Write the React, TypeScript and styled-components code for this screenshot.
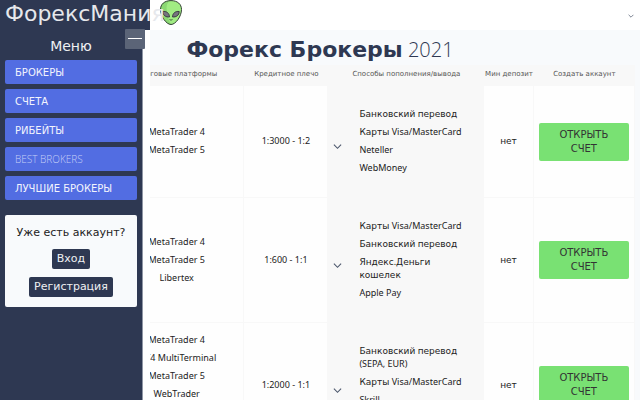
import React, { Fragment } from 'react';
import styled, { createGlobalStyle } from 'styled-components';

const GlobalStyle = createGlobalStyle`
  *, *::before, *::after { box-sizing: border-box; }
  body {
    margin: 0;
    background: #fefefe;
    color: #222;
    font: 9px/13px "DejaVu Sans", sans-serif;
  }
  button { font-family: inherit; cursor: pointer; }
  a { color: inherit; text-decoration: none; }
`;

const Page = styled.div`
  display: flex;
  flex-direction: column;
  height: 100vh;
  overflow: hidden;
`;

const TopBar = styled.header`
  display: flex;
  flex: none;
  align-items: center;
  justify-content: space-between;
  height: 30px;
  background: #fff;
`;

const Brand = styled.a`
  position: relative;
  display: flex;
  align-items: center;
  width: 150px;
  height: 30px;
  padding: 0 0 2px 5px;
  background: #2e3852;
  color: #e6e8ec;
  font-size: 22px;
  line-height: 28px;
  white-space: nowrap;
`;

const Mascot = styled.svg`
  position: absolute;
  left: 159px;
  top: 0;
  width: 24px;
  height: 26px;
`;

const BrandName = styled.span`
  position: relative;
  z-index: 1;
`;

const IconButton = styled.button`
  display: flex;
  padding: 0;
  border: 0;
  background: none;
  color: #4b566b;
`;

const LanguageButton = styled(IconButton)`
  margin: 2px 6px 0 0;
`;

const Body = styled.div`
  display: flex;
  flex: 1;
  min-height: 0;
`;

const Sidebar = styled.aside`
  position: relative;
  flex: none;
  width: 143px;
  padding: 6px 5px 0;
  background: #2e3852;
  border-right: 1px solid #8f96a5;
`;

const CollapseButton = styled.button`
  position: absolute;
  z-index: 2;
  top: -1px;
  right: -3px;
  display: flex;
  align-items: center;
  justify-content: center;
  width: 20px;
  height: 20px;
  padding: 0;
  border: 0;
  border-radius: 1px;
  background: #5b6477;
`;

const MenuTitle = styled.h2`
  margin: 0 0 4px;
  color: #eef0f3;
  font-size: 14px;
  font-weight: 400;
  line-height: 20px;
  text-align: center;
`;

const Menu = styled.nav`
  display: flex;
  flex-direction: column;
  gap: 5px;
`;

const MenuLink = styled.a`
  padding: 6px 10px 4px;
  border-radius: 2px;
  background: #526de2;
  color: #f2f4fd;
  font-size: 10px;
  line-height: 14px;
`;

const LightLatin = styled.span`
  color: #c3cdf7;
  font-family: "Open Sans", "Noto Sans", sans-serif;
  font-weight: 300;
  line-height: 10px;
`;

const Account = styled.section`
  display: flex;
  flex-direction: column;
  align-items: center;
  gap: 8px;
  margin-top: 15px;
  padding: 10px 5px;
  border-radius: 2px;
  background: #f8fafc;
`;

const AccountText = styled.p`
  margin: 0;
  font-size: 11px;
  line-height: 16px;
`;

const AccountButton = styled.button`
  padding: 2px 5px;
  border: 0;
  border-radius: 2px;
  background: #2e3852;
  color: #eef0f3;
  font-size: 11px;
  line-height: 16px;
`;

const Main = styled.main`
  flex: 1;
  min-width: 0;
  margin-left: 7px;
  padding-right: 5px;
  overflow: hidden;
  background: #f8fafc;
`;

const Title = styled.h1`
  margin: 0;
  padding: 5px 145px 0 0;
  color: #2e3852;
  font-size: 22px;
  font-weight: 700;
  line-height: 30px;
  text-align: center;
  white-space: nowrap;
`;

const Year = styled.span`
  font-family: "Open Sans", "Noto Sans", sans-serif;
  font-size: 20px;
  font-weight: 300;
  line-height: 20px;
`;

const Latin = styled.span`
  font-family: "Noto Sans", sans-serif;
  line-height: 9px;
`;

const Table = styled.table`
  width: calc(100% + 40px);
  margin-left: -40px;
  border-collapse: separate;
  border-spacing: 0;
  table-layout: fixed;
  background: #f8f8f8;
`;

const Column = styled.col<{ $share: number }>`
  width: ${({ $share }) => $share}%;
`;

const Heading = styled.th`
  height: 21px;
  padding: 0 0 3px;
  color: #555;
  font-size: 7px;
  font-weight: 400;
  line-height: 10px;
  text-align: center;
  white-space: nowrap;
`;

const Cell = styled.td`
  padding: 10px 5px;
  border-right: 1px solid #f8f8f8;
  border-bottom: 1px solid #f8f8f8;
  background: #fefefe;
  text-align: center;
  vertical-align: middle;
`;

const PaymentCell = styled(Cell)`
  padding: 22px 20px 22px 5px;
  background: #f8f8f8;
`;

const List = styled.ul<{ $align?: 'left' }>`
  display: flex;
  flex-direction: column;
  gap: 5px;
  margin: 0;
  padding: 0;
  list-style: none;
  text-align: ${({ $align }) => $align ?? 'center'};
`;

const Payments = styled.div`
  display: flex;
  align-items: center;
  gap: 17px;
`;

const ExpandButton = styled(IconButton)`
  flex: none;
  margin-top: 10px;
`;

const OpenButton = styled.a`
  display: block;
  padding: 5px 15px;
  border-radius: 2px;
  background: #79e173;
  color: #333;
  font-size: 10px;
  line-height: 14px;
`;

function Text({ children }: { children: string }) {
  return (
    <>
      {children.split(/([А-Яа-яЁё]+)/).map((run, i) =>
        i % 2 ? <Fragment key={i}>{run}</Fragment> : run && <Latin key={i}>{run}</Latin>,
      )}
    </>
  );
}

function Chevron({ size }: { size: number }) {
  return (
    <svg width={size} height={size} viewBox="0 0 10 10" fill="none" stroke="currentColor" strokeWidth="1.2" aria-hidden="true">
      <path d="M1 3l4 4 4-4" />
    </svg>
  );
}

function Alien() {
  return (
    <Mascot viewBox="0 0 24 26" aria-hidden="true">
      <path d="M12 .6C5.500.6 1.500 4.200 1.500 9.500c0 6.600 5.700 15 10.500 15s10.500-8.400 10.500-15C22.500 4.200 18.500.6 12 .6z" fill="#a1ec83" />
      <path d="M12 .6C8 2 7 6 8 12c.5 5 2 9 4 12.500-4.800 0-10.500-8.400-10.500-15C1.500 4.200 5.500.6 12 .6z" fill="#8bd873" />
      <path d="M12 .6C5.500.6 1.500 4.200 1.500 9.500c0 6.600 5.700 15 10.500 15s10.500-8.400 10.500-15C22.500 4.200 18.500.6 12 .6z" fill="none" stroke="#344036" />
      <path d="M3.800 11.500c3.600-.5 6.500 1.500 6.700 5.400-3.600.5-6.700-1.600-6.700-5.400zM20.200 11.500c-3.600-.5-6.500 1.500-6.700 5.400 3.600.5 6.700-1.600 6.700-5.400z" fill="#77747f" stroke="#383b40" />
      <path d="M10.500 19.500q1.500 1.300 3 0" fill="none" stroke="#344036" strokeWidth=".8" />
    </Mascot>
  );
}

const menu = ['БРОКЕРЫ', 'СЧЕТА', 'РИБЕЙТЫ', 'BEST BROKERS', 'ЛУЧШИЕ БРОКЕРЫ'];
const headings = ['Торговые платформы', 'Кредитное плечо', 'Способы пополнения/вывода', 'Мин депозит', 'Создать аккаунт'];
const shares = [25.6, 16, 29.7, 9.4, 19.3];

const brokers = [
  {
    platforms: ['MetaTrader 4', 'MetaTrader 5'],
    leverage: '1:3000 - 1:2',
    payments: ['Банковский перевод', 'Карты Visa/MasterCard', 'Neteller', 'WebMoney'],
  },
  {
    platforms: ['MetaTrader 4', 'MetaTrader 5', 'Libertex'],
    leverage: '1:600 - 1:1',
    payments: ['Карты Visa/MasterCard', 'Банковский перевод', 'Яндекс.Деньги кошелек', 'Apple Pay'],
  },
  {
    platforms: ['MetaTrader 4', 'MT4 MultiTerminal', 'MetaTrader 5', 'WebTrader', 'cTrader', 'Mobile'],
    leverage: '1:2000 - 1:1',
    payments: ['Банковский перевод (SEPA, EUR)', 'Карты Visa/MasterCard', 'Skrill', 'Neteller'],
  },
];

export default function App() {
  return (
    <Page>
      <GlobalStyle />
      <TopBar>
        <Brand href="#">
          <BrandName>ФорексМания</BrandName>
          <Alien />
        </Brand>
        <LanguageButton aria-label="Открыть меню">
          <Chevron size={6} />
        </LanguageButton>
      </TopBar>
      <Body>
        <Sidebar>
          <CollapseButton aria-label="Свернуть меню">
            <svg width="14" height="2" viewBox="0 0 14 2" aria-hidden="true">
              <path d="M0 .5h14" stroke="#fff" />
            </svg>
          </CollapseButton>
          <MenuTitle>Меню</MenuTitle>
          <Menu>
            {menu.map((item) => (
              <MenuLink href="#" key={item}>
                {/^[A-Z ]+$/.test(item) ? <LightLatin>{item}</LightLatin> : item}
              </MenuLink>
            ))}
          </Menu>
          <Account>
            <AccountText>Уже есть аккаунт?</AccountText>
            <AccountButton>Вход</AccountButton>
            <AccountButton>Регистрация</AccountButton>
          </Account>
        </Sidebar>
        <Main>
          <Title>
            Форекс Брокеры<Year> 2021</Year>
          </Title>
          <Table>
            <colgroup>
              {shares.map((share, i) => (
                <Column key={i} $share={share} />
              ))}
            </colgroup>
            <thead>
              <tr>
                {headings.map((heading) => (
                  <Heading key={heading} scope="col">{heading}</Heading>
                ))}
              </tr>
            </thead>
            <tbody>
              {brokers.map((broker) => (
                <tr key={broker.leverage}>
                  <Cell>
                    <List>
                      {broker.platforms.map((name) => (
                        <li key={name}><Text>{name}</Text></li>
                      ))}
                    </List>
                  </Cell>
                  <Cell><Text>{broker.leverage}</Text></Cell>
                  <PaymentCell>
                    <Payments>
                      <ExpandButton aria-label="Показать все способы">
                        <Chevron size={9} />
                      </ExpandButton>
                      <List $align="left">
                        {broker.payments.map((name) => (
                          <li key={name}><Text>{name}</Text></li>
                        ))}
                      </List>
                    </Payments>
                  </PaymentCell>
                  <Cell>нет</Cell>
                  <Cell>
                    <OpenButton href="#">ОТКРЫТЬ СЧЕТ</OpenButton>
                  </Cell>
                </tr>
              ))}
            </tbody>
          </Table>
        </Main>
      </Body>
    </Page>
  );
}
